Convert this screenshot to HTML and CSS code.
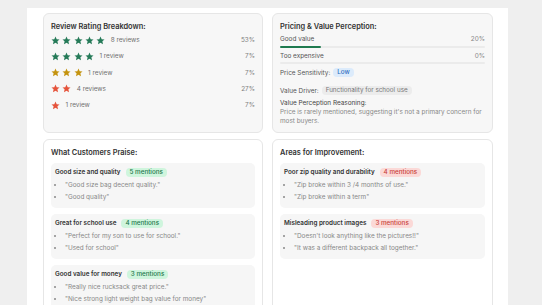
FILE: index.html
```html
<!DOCTYPE html>
<html lang="en">
<head>
  <meta charset="UTF-8">
  <meta name="viewport" content="width=device-width, initial-scale=1.0">
  <title>Review Insights</title>
  <link rel="stylesheet" href="styles.css">
</head>
<body>

  <div class="panel">

    <!-- Rating breakdown -->
    <div class="card card-muted">
      <h3>Review Rating Breakdown:</h3>
      <div class="rating-row">
        <span class="stars green">
          <svg viewBox="0 0 24 24"><path d="M12 1.5l3.2 6.9 7.5.8-5.6 5.1 1.6 7.4L12 17.9l-6.7 3.8 1.6-7.4-5.6-5.1 7.5-.8z"/></svg>
          <svg viewBox="0 0 24 24"><path d="M12 1.5l3.2 6.9 7.5.8-5.6 5.1 1.6 7.4L12 17.9l-6.7 3.8 1.6-7.4-5.6-5.1 7.5-.8z"/></svg>
          <svg viewBox="0 0 24 24"><path d="M12 1.5l3.2 6.9 7.5.8-5.6 5.1 1.6 7.4L12 17.9l-6.7 3.8 1.6-7.4-5.6-5.1 7.5-.8z"/></svg>
          <svg viewBox="0 0 24 24"><path d="M12 1.5l3.2 6.9 7.5.8-5.6 5.1 1.6 7.4L12 17.9l-6.7 3.8 1.6-7.4-5.6-5.1 7.5-.8z"/></svg>
          <svg viewBox="0 0 24 24"><path d="M12 1.5l3.2 6.9 7.5.8-5.6 5.1 1.6 7.4L12 17.9l-6.7 3.8 1.6-7.4-5.6-5.1 7.5-.8z"/></svg>
        </span>
        <span class="count">8 reviews</span>
        <span class="pct">53%</span>
      </div>
      <div class="rating-row">
        <span class="stars green">
          <svg viewBox="0 0 24 24"><path d="M12 1.5l3.2 6.9 7.5.8-5.6 5.1 1.6 7.4L12 17.9l-6.7 3.8 1.6-7.4-5.6-5.1 7.5-.8z"/></svg>
          <svg viewBox="0 0 24 24"><path d="M12 1.5l3.2 6.9 7.5.8-5.6 5.1 1.6 7.4L12 17.9l-6.7 3.8 1.6-7.4-5.6-5.1 7.5-.8z"/></svg>
          <svg viewBox="0 0 24 24"><path d="M12 1.5l3.2 6.9 7.5.8-5.6 5.1 1.6 7.4L12 17.9l-6.7 3.8 1.6-7.4-5.6-5.1 7.5-.8z"/></svg>
          <svg viewBox="0 0 24 24"><path d="M12 1.5l3.2 6.9 7.5.8-5.6 5.1 1.6 7.4L12 17.9l-6.7 3.8 1.6-7.4-5.6-5.1 7.5-.8z"/></svg>
        </span>
        <span class="count">1 review</span>
        <span class="pct">7%</span>
      </div>
      <div class="rating-row">
        <span class="stars gold">
          <svg viewBox="0 0 24 24"><path d="M12 1.5l3.2 6.9 7.5.8-5.6 5.1 1.6 7.4L12 17.9l-6.7 3.8 1.6-7.4-5.6-5.1 7.5-.8z"/></svg>
          <svg viewBox="0 0 24 24"><path d="M12 1.5l3.2 6.9 7.5.8-5.6 5.1 1.6 7.4L12 17.9l-6.7 3.8 1.6-7.4-5.6-5.1 7.5-.8z"/></svg>
          <svg viewBox="0 0 24 24"><path d="M12 1.5l3.2 6.9 7.5.8-5.6 5.1 1.6 7.4L12 17.9l-6.7 3.8 1.6-7.4-5.6-5.1 7.5-.8z"/></svg>
        </span>
        <span class="count">1 review</span>
        <span class="pct">7%</span>
      </div>
      <div class="rating-row">
        <span class="stars red">
          <svg viewBox="0 0 24 24"><path d="M12 1.5l3.2 6.9 7.5.8-5.6 5.1 1.6 7.4L12 17.9l-6.7 3.8 1.6-7.4-5.6-5.1 7.5-.8z"/></svg>
          <svg viewBox="0 0 24 24"><path d="M12 1.5l3.2 6.9 7.5.8-5.6 5.1 1.6 7.4L12 17.9l-6.7 3.8 1.6-7.4-5.6-5.1 7.5-.8z"/></svg>
        </span>
        <span class="count">4 reviews</span>
        <span class="pct">27%</span>
      </div>
      <div class="rating-row">
        <span class="stars red">
          <svg viewBox="0 0 24 24"><path d="M12 1.5l3.2 6.9 7.5.8-5.6 5.1 1.6 7.4L12 17.9l-6.7 3.8 1.6-7.4-5.6-5.1 7.5-.8z"/></svg>
        </span>
        <span class="count">1 review</span>
        <span class="pct">7%</span>
      </div>
    </div>

    <!-- Pricing -->
    <div class="card card-muted">
      <h3>Pricing &amp; Value Perception:</h3>
      <div class="metric">
        <div class="metric-label"><span>Good value</span><span>20%</span></div>
        <div class="track"><div class="fill" style="width: 20%"></div></div>
      </div>
      <div class="metric">
        <div class="metric-label"><span>Too expensive</span><span>0%</span></div>
        <div class="track"><div class="fill" style="width: 0%"></div></div>
      </div>
      <div class="info-row">Price Sensitivity: <span class="tag tag-blue">Low</span></div>
      <div class="info-row driver">Value Driver: <span class="tag tag-grey">Functionality for school use</span></div>
      <div class="reason-title">Value Perception Reasoning:</div>
      <p class="reason">Price is rarely mentioned, suggesting it's not a primary concern for most buyers.</p>
    </div>

    <!-- Praise -->
    <div class="card">
      <h3>What Customers Praise:</h3>
      <div class="theme">
        <div class="theme-head">Good size and quality <span class="tag tag-green">5 mentions</span></div>
        <ul>
          <li>"Good size bag decent quality."</li>
          <li>"Good quality"</li>
        </ul>
      </div>
      <div class="theme">
        <div class="theme-head">Great for school use <span class="tag tag-green">4 mentions</span></div>
        <ul>
          <li>"Perfect for my son to use for school."</li>
          <li>"Used for school"</li>
        </ul>
      </div>
      <div class="theme">
        <div class="theme-head">Good value for money <span class="tag tag-green">3 mentions</span></div>
        <ul>
          <li>"Really nice rucksack great price."</li>
          <li>"Nice strong light weight bag value for money"</li>
        </ul>
      </div>
    </div>

    <!-- Improvement -->
    <div class="card">
      <h3>Areas for Improvement:</h3>
      <div class="theme">
        <div class="theme-head">Poor zip quality and durability <span class="tag tag-red">4 mentions</span></div>
        <ul>
          <li>"Zip broke within 3 /4 months of use."</li>
          <li>"Zip broke within a term"</li>
        </ul>
      </div>
      <div class="theme">
        <div class="theme-head">Misleading product images <span class="tag tag-red">3 mentions</span></div>
        <ul>
          <li>"Doesn't look anything like the pictures!!"</li>
          <li>"It was a different backpack all together."</li>
        </ul>
      </div>
    </div>

  </div>

</body>
</html>
```

FILE: styles.css
```css
body {
  margin: 0;
  background: #efefef;
  font-family: Inter, "Noto Sans", sans-serif;
  color: #333;
  overflow: hidden;
}
.panel {
  margin: 8px 0 0 27px;
  width: 481px;
  height: 297px;
  box-sizing: border-box;
  overflow: hidden;
  padding: 5px 15px 0 16px;
  background: #fff;
  display: grid;
  grid-template-columns: 220px 221px;
  grid-template-rows: 120px 175px;
  column-gap: 9px;
  row-gap: 6px;
}
.card {
  border: 1px solid #e6e6e6;
  border-radius: 6px;
  padding: 7px;
  background: #fff;
}
.card-muted {
  background: #f7f7f7;
}
h3 {
  margin: 0;
  font-size: 7.4px;
  line-height: 11px;
  font-weight: 600;
  color: #333;
}
.rating-row {
  display: flex;
  align-items: center;
  height: 16.25px;
  font-size: 6.4px;
  color: #707070;
}
.stars {
  display: flex;
  gap: 2.3px;
}
.stars svg {
  width: 9px;
  height: 9px;
  flex: none;
}
.green svg { fill: #257a58; }
.gold svg { fill: #c4930f; }
.red svg { fill: #e5533b; }
.count {
  margin-left: 5.5px;
}
.pct {
  margin-left: auto;
  color: #808080;
}
.metric {
  margin-top: 3px;
  height: 13.5px;
}
.metric-label {
  display: flex;
  justify-content: space-between;
  font-size: 6.4px;
  line-height: 9px;
  color: #555;
}
.metric-label span:last-child {
  color: #888;
}
.track {
  margin-top: 1.5px;
  height: 2px;
  background: #ebebeb;
  border-radius: 1px;
}
.fill {
  height: 100%;
  background: #1f7a4f;
  border-radius: 1px;
}
.info-row {
  margin-top: 2.5px;
  font-size: 6.4px;
  line-height: 10px;
  color: #555;
  display: flex;
  align-items: center;
  gap: 3px;
}
.driver {
  margin-top: 8px;
}
.tag {
  display: inline-block;
  font-size: 6.3px;
  line-height: 9px;
  padding: 0 4px;
  border-radius: 4px;
  font-weight: 500;
}
.tag-blue {
  background: #dcebfb;
  color: #2f6fc0;
}
.tag-grey {
  background: #ececec;
  color: #777;
  font-weight: 400;
}
.tag-green {
  background: #cff5dd;
  color: #23784c;
}
.tag-red {
  background: #fbd9d7;
  color: #c9423a;
}
.reason-title {
  margin-top: 3px;
  font-size: 6.4px;
  line-height: 9px;
  color: #444;
}
.reason {
  margin: 0;
  font-size: 6.4px;
  line-height: 9px;
  color: #888;
}
.card h3 + .theme {
  margin-top: 5px;
}
.theme {
  background: #f6f6f6;
  border-radius: 5px;
  padding: 4.5px 4px 5px;
  margin-top: 6px;
}
.theme-head {
  display: flex;
  align-items: center;
  gap: 5px;
  font-size: 6.3px;
  line-height: 9px;
  font-weight: 600;
  color: #333;
}
.theme ul {
  margin: 2.5px 0 0;
  padding-left: 10px;
  font-size: 6.4px;
  line-height: 12px;
  color: #888;
}
```
